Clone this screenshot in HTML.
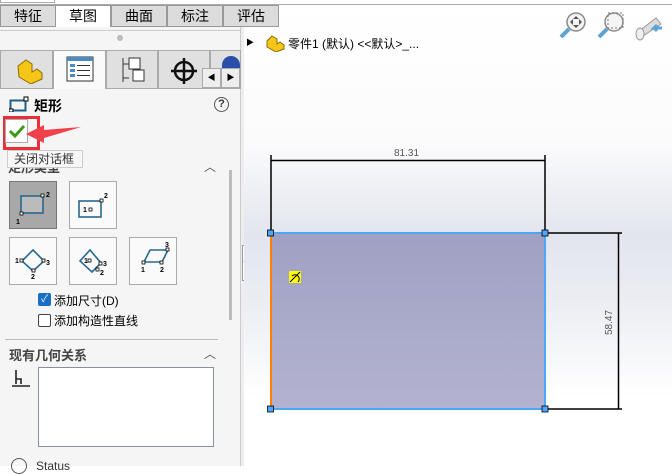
<!DOCTYPE html>
<html><head><meta charset="utf-8"><style>
*{margin:0;padding:0;box-sizing:border-box}
body{width:672px;height:466px;overflow:hidden;position:relative;background:#fff;font-family:"Liberation Sans","Noto Sans CJK SC",sans-serif;font-size:12px;color:#000}
.a{position:absolute}
.tab{position:absolute;top:5px;height:22px;width:56px;border:1px solid #999;background:#dcdcdc;text-align:center;line-height:20px;font-size:14px;z-index:5}
.btn{position:absolute;width:48px;height:48px;border:1px solid #aaa;background:#fafafa}
</style></head><body>
<div class="a" style="left:0;top:0;width:672px;height:5px;background:#fff;border-bottom:1px solid #aaa"></div>
<div class="a" style="left:0;top:0;width:55px;height:3px;border:1px solid #aaa;border-top:none"></div>
<div class="tab" style="left:0">特征</div>
<div class="tab" style="left:55px;background:#fff;border-bottom:none">草图</div>
<div class="tab" style="left:111px">曲面</div>
<div class="tab" style="left:167px">标注</div>
<div class="tab" style="left:223px">评估</div>
<!-- left panel -->
<div class="a" style="left:0;top:27px;width:241px;height:439px;background:#f5f5f5;border-right:1px solid #ccc"></div>
<div class="a" style="left:0;top:30px;width:241px;height:1px;background:#ccc"></div>
<div class="a" style="left:117px;top:35px;width:6px;height:6px;border-radius:50%;background:#bbb"></div>
<div class="a" style="left:0;top:88px;width:241px;height:1px;background:#aaa"></div>
<div class="a" style="left:0;top:50px;width:53px;height:39px;background:#e0e0e0;border:1px solid #aaa"></div>
<div class="a" style="left:53px;top:50px;width:53px;height:39px;background:#fafafa;border:1px solid #aaa;border-bottom:none"></div>
<div class="a" style="left:106px;top:50px;width:52px;height:39px;background:#e0e0e0;border:1px solid #aaa"></div>
<div class="a" style="left:158px;top:50px;width:52px;height:39px;background:#e0e0e0;border:1px solid #aaa"></div>
<div class="a" style="left:210px;top:50px;width:31px;height:39px;background:#e0e0e0;border:1px solid #aaa"></div>
<svg class="a" style="left:14px;top:56px" width="30" height="28"><path d="M4 10l8-6 6 4v8l5-3 5 4v6l-11 5-12-7z" fill="#f5c518" stroke="#8a6d00"/></svg>
<svg class="a" style="left:66px;top:56px" width="28" height="26"><rect x="1" y="1" width="26" height="24" fill="#fff" stroke="#333"/><rect x="1" y="1" width="26" height="4" fill="#4a8bc2"/><g fill="#4a8bc2"><rect x="4" y="8" width="5" height="3"/><rect x="4" y="13" width="5" height="3"/><rect x="4" y="18" width="5" height="3"/></g><g stroke="#333"><path d="M11 9.5h13M11 14.5h13M11 19.5h13"/></g></svg>
<svg class="a" style="left:120px;top:56px" width="26" height="28"><path d="M3 2v24M3 8h6M3 22h6" stroke="#333" fill="none"/><rect x="9" y="2" width="11" height="11" fill="#fff" stroke="#333"/><rect x="13" y="14" width="11" height="11" fill="#fff" stroke="#333"/></svg>
<svg class="a" style="left:170px;top:57px" width="28" height="28"><circle cx="14" cy="14" r="9" fill="none" stroke="#111" stroke-width="2.5"/><path d="M14 1v26M1 14h26" stroke="#111" stroke-width="2.5"/></svg>
<div class="a" style="left:222px;top:56px;width:18px;height:14px;border-radius:9px 9px 0 0;background:#2a4fa8"></div>
<div class="a" style="left:202px;top:68px;width:19px;height:20px;background:#eee;border:1px solid #aaa;font-size:8px;text-align:center;line-height:18px">◀</div>
<div class="a" style="left:221px;top:68px;width:19px;height:20px;background:#eee;border:1px solid #aaa;font-size:8px;text-align:center;line-height:18px">▶</div>
<svg class="a" style="left:9px;top:96px" width="20" height="16"><rect x="1.5" y="4.5" width="15" height="10" fill="none" stroke="#1f5f8b" stroke-width="2"/><rect x="15" y="1" width="4" height="4" fill="#fff" stroke="#000"/><rect x="0" y="13" width="4" height="3" fill="#fff" stroke="#000"/></svg>
<div class="a" style="left:34px;top:96px;font-size:14px;font-weight:bold">矩形</div>
<div class="a" style="left:214px;top:97px;width:15px;height:15px;border-radius:50%;border:1.5px solid #555;font-size:11px;font-weight:bold;text-align:center;line-height:12px;color:#333">?</div>
<div class="a" style="left:3px;top:116px;width:37px;height:34px;border:3px solid #e8303a"></div>
<div class="a" style="left:5px;top:119px;width:23px;height:24px;background:#fff;border:1px solid #aaa"></div>
<svg class="a" style="left:8px;top:124px" width="18" height="14"><path d="M2 7l5 5 9-10" stroke="#3a9a18" stroke-width="3" fill="none"/></svg>
<svg class="a" style="left:26px;top:124px" width="56" height="20"><path d="M0 10l18-9v5l37-3-37 11v5z" fill="#f0404a"/></svg>
<div class="a" style="left:7px;top:150px;width:76px;height:18px;background:#f7f7f7;border:1px solid #ccc;font-size:12px;line-height:16px;padding-left:6px;color:#333;z-index:3">关闭对话框</div>
<div class="a" style="left:8px;top:167px;font-size:13px;font-weight:bold;color:#444;height:8px;overflow:hidden;line-height:2px">矩形类型</div>
<div class="a" style="left:204px;top:158px;font-size:12px;color:#555">︿</div>
<div class="a" style="left:229px;top:170px;width:3px;height:150px;background:#bbb"></div>
<div class="btn" style="left:9px;top:181px;background:#a8a8a8;border-color:#777"></div>
<div class="btn" style="left:69px;top:181px"></div>
<div class="btn" style="left:9px;top:237px"></div>
<div class="btn" style="left:69px;top:237px"></div>
<div class="btn" style="left:129px;top:237px"></div>
<svg class="a" style="left:0;top:180px;width:240px;height:110px" font-family="Liberation Sans" font-size="7" font-weight="bold">
<g transform="translate(0,4)">
<g fill="none" stroke="#276a8f" stroke-width="1.6"><rect x="21" y="12" width="22" height="17" fill="#bbb"/><rect x="79" y="17" width="22" height="16"/></g>
<g fill="#fff" stroke="#000" stroke-width=".8"><rect x="41" y="10" width="3" height="3"/><rect x="20" y="28" width="3" height="3"/><rect x="100" y="15" width="3" height="3"/><rect x="89" y="24" width="3" height="3"/></g>
<text x="46" y="13">2</text><text x="16" y="40">1</text><text x="104" y="14">2</text><text x="83" y="28">1</text></g>
<g transform="translate(0,10)">
<g fill="none" stroke="#276a8f" stroke-width="1.6"><path d="M33 60l11 11-11 10-11-10z"/><path d="M90 60l11 13-9 9-12-11z"/><path d="M144 72l6-12h18l-6 12z"/></g>
<g fill="#fff" stroke="#000" stroke-width=".8"><rect x="20" y="69" width="3" height="3"/><rect x="42" y="69" width="3" height="3"/><rect x="32" y="79" width="3" height="3"/><rect x="88" y="69" width="3" height="3"/><rect x="99" y="72" width="3" height="3"/><rect x="96" y="78" width="3" height="3"/><rect x="142" y="71" width="3" height="3"/><rect x="160" y="71" width="3" height="3"/><rect x="166" y="58" width="3" height="3"/></g>
<text x="15" y="73">1</text><text x="46" y="75">3</text><text x="31" y="89">2</text><text x="84" y="73">1</text><text x="103" y="76">3</text><text x="100" y="85">2</text><text x="141" y="82">1</text><text x="160" y="82">2</text><text x="165" y="57">3</text></g></svg>
<div class="a" style="left:38px;top:293px;width:13px;height:13px;background:#1a6fc4;border-radius:2px;color:#fff;font-size:10px;text-align:center;line-height:13px">✓</div>
<div class="a" style="left:54px;top:292px;font-size:12px">添加尺寸(D)</div>
<div class="a" style="left:38px;top:314px;width:13px;height:13px;border:1px solid #444;border-radius:2px;background:#fff"></div>
<div class="a" style="left:54px;top:312px;font-size:12px">添加构造性直线</div>
<div class="a" style="left:5px;top:339px;width:213px;height:1px;background:#bbb"></div>
<div class="a" style="left:9px;top:345px;font-size:13px;font-weight:bold;color:#444">现有几何关系</div>
<div class="a" style="left:204px;top:345px;font-size:12px;color:#555">︿</div>
<svg class="a" style="left:11px;top:369px" width="20" height="20"><path d="M5 1v14M1 17h18M5 10h5v5" stroke="#222" stroke-width="1.6" fill="none"/></svg>
<div class="a" style="left:38px;top:367px;width:176px;height:80px;background:#fff;border:1px solid #8a8fa8"></div>
<div class="a" style="left:11px;top:458px;width:16px;height:16px;border-radius:50%;border:1.5px solid #555"></div>
<div class="a" style="left:36px;top:459px;font-size:12px;color:#333">Status</div>
<!-- divider -->
<div class="a" style="left:241px;top:27px;width:3px;height:439px;background:#eee"></div>
<div class="a" style="left:242px;top:245px;width:7px;height:36px;background:#fff;border:1px solid #999;font-size:6px;line-height:34px">◀</div>
<!-- viewport -->
<div class="a" style="left:244px;top:6px;width:428px;height:460px;background:linear-gradient(180deg,#fff 0%,#fbfbfc 30%,#e2e5ee 50%,#eceef3 65%,#fff 85%)"></div>
<div class="a" style="left:246px;top:37px;font-size:8px">▶</div>
<svg class="a" style="left:265px;top:34px" width="20" height="18"><path d="M2 7l5-5 5 3v5l3-2 4 3v4l-8 3-9-5z" fill="#f5c518" stroke="#8a6d00"/></svg>
<div class="a" style="left:288px;top:35px;font-size:12px">零件1 (默认) &lt;&lt;默认&gt;_...</div>
<svg class="a" style="left:556px;top:10px" width="110" height="32"><g fill="none" stroke="#8a8a8a" stroke-width="1.5"><circle cx="20" cy="12" r="9" fill="#f4f4f4"/><circle cx="58" cy="12" r="9" fill="#f4f4f4"/></g><path d="M13 19l-8 8M51 19l-8 8" stroke="#5ba3d6" stroke-width="4"/><path d="M20 6l3 3h-6zM20 18l3-3h-6zM14 12l3-3v6zM26 12l-3-3v6z" fill="#555"/><rect x="52" y="3" width="15" height="15" fill="none" stroke="#777" stroke-dasharray="2 2"/><path d="M82 22l18-14 5 6-18 12z" fill="#ddd" stroke="#999"/><ellipse cx="84" cy="24" rx="4" ry="6" fill="#eee" stroke="#999"/><path d="M106 18h-8l3-3M98 18l3 3" stroke="#5ba3d6" stroke-width="3" fill="none"/></svg>
<!-- drawing -->
<svg class="a" style="left:0;top:0" width="672" height="466">
<defs><linearGradient id="g" x1="0" y1="0" x2="0" y2="1"><stop offset="0" stop-color="#a0a0c4"/><stop offset="1" stop-color="#b3b3d0"/></linearGradient></defs>
<g stroke="#000" stroke-width="1.5"><path d="M271 155v78M545 155v78M271 160.5h274M545 233h77M545 409h77M618.5 233v176"/></g>
<rect x="271" y="233" width="274" height="176" fill="url(#g)" stroke="#4da6ff" stroke-width="2"/>
<path d="M271 234v174" stroke="#ff8000" stroke-width="2"/>
<g fill="#4da6ff" stroke="#000" stroke-width=".8"><rect x="267.5" y="230" width="6" height="6"/><rect x="542" y="230" width="6" height="6"/><rect x="267.5" y="406" width="6" height="6"/><rect x="542" y="406" width="6" height="6"/></g>
<text x="394" y="156" font-family="Liberation Sans" font-size="10" fill="#555">81.31</text>
<text transform="translate(612,335) rotate(-90)" font-family="Liberation Sans" font-size="10" fill="#555">58.47</text>
<rect x="289" y="271" width="12" height="12" fill="#ff0"/><path d="M290 282l10-10M292 276a4 4 0 0 1 6 6" stroke="#000" fill="none"/>
</svg>
</body></html>
